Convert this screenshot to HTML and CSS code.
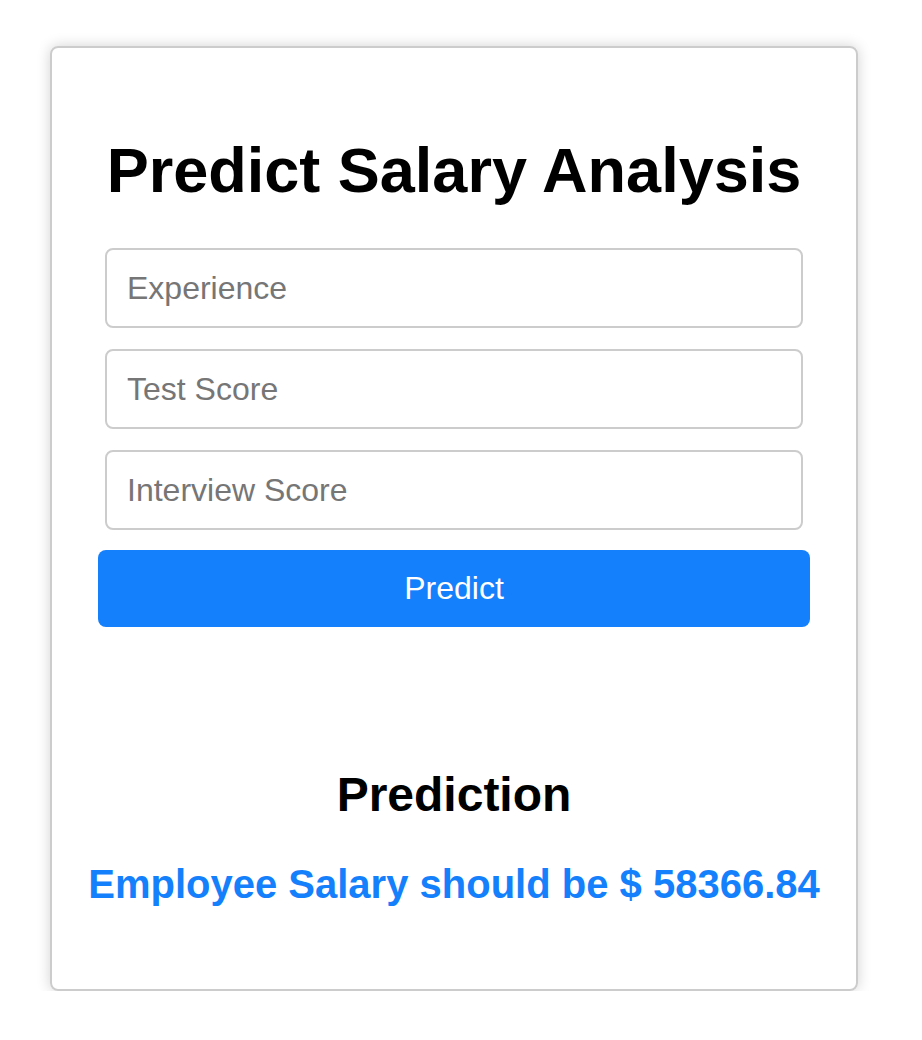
FILE: index.html
```html
<!DOCTYPE html>
<html>
<head>
<meta charset="utf-8">
<link rel="stylesheet" href="styles.css">
</head>
<body>
<div class="card">
  <h1 class="title">Predict Salary Analysis</h1>
  <form class="form">
    <input class="field" type="text" placeholder="Experience">
    <input class="field" type="text" placeholder="Test Score">
    <input class="field" type="text" placeholder="Interview Score">
    <button class="btn" type="button">Predict</button>
  </form>
  <h2 class="pred-title">Prediction</h2>
  <p class="result">Employee Salary should be $ 58366.84</p>
</div>
</body>
</html>
```

FILE: styles.css
```css
html, body {
  margin: 0;
  padding: 0;
  background: #fff;
  font-family: "Liberation Sans", Arial, sans-serif;
}
body {
  padding: 46px 0 0 50px;
}
.card {
  box-sizing: border-box;
  width: 808px;
  border: 2px solid #cccccc;
  border-radius: 8px;
  box-shadow: 0 0 14px rgba(0, 0, 0, 0.18);
  padding: 85px 46px 82px;
  text-align: center;
}
.title {
  margin: 0;
  font-size: 63px;
  line-height: 74px;
  font-weight: bold;
  color: #000;
}
.form {
  margin-top: 41px;
  display: flex;
  flex-direction: column;
}
.field {
  box-sizing: border-box;
  margin: 0 7px 21px;
  height: 80px;
  border: 2px solid #cccccc;
  border-radius: 8px;
  padding: 0 20px;
  font-family: "Liberation Sans", Arial, sans-serif;
  font-size: 32px;
  color: #000;
  outline: none;
}
.field::placeholder {
  color: #767676;
}
.form .field:last-of-type {
  margin-bottom: 20px;
}
.btn {
  height: 77px;
  border: none;
  border-radius: 8px;
  background: #1580fb;
  color: #fff;
  font-family: "Liberation Sans", Arial, sans-serif;
  font-size: 32px;
  cursor: pointer;
}
.pred-title {
  margin: 140px 0 0;
  font-size: 48px;
  line-height: 56px;
  font-weight: bold;
  color: #000;
}
.result {
  margin: 38px -40px 0;
  font-size: 40px;
  line-height: 46px;
  font-weight: bold;
  color: #1580fb;
  white-space: nowrap;
}
```
